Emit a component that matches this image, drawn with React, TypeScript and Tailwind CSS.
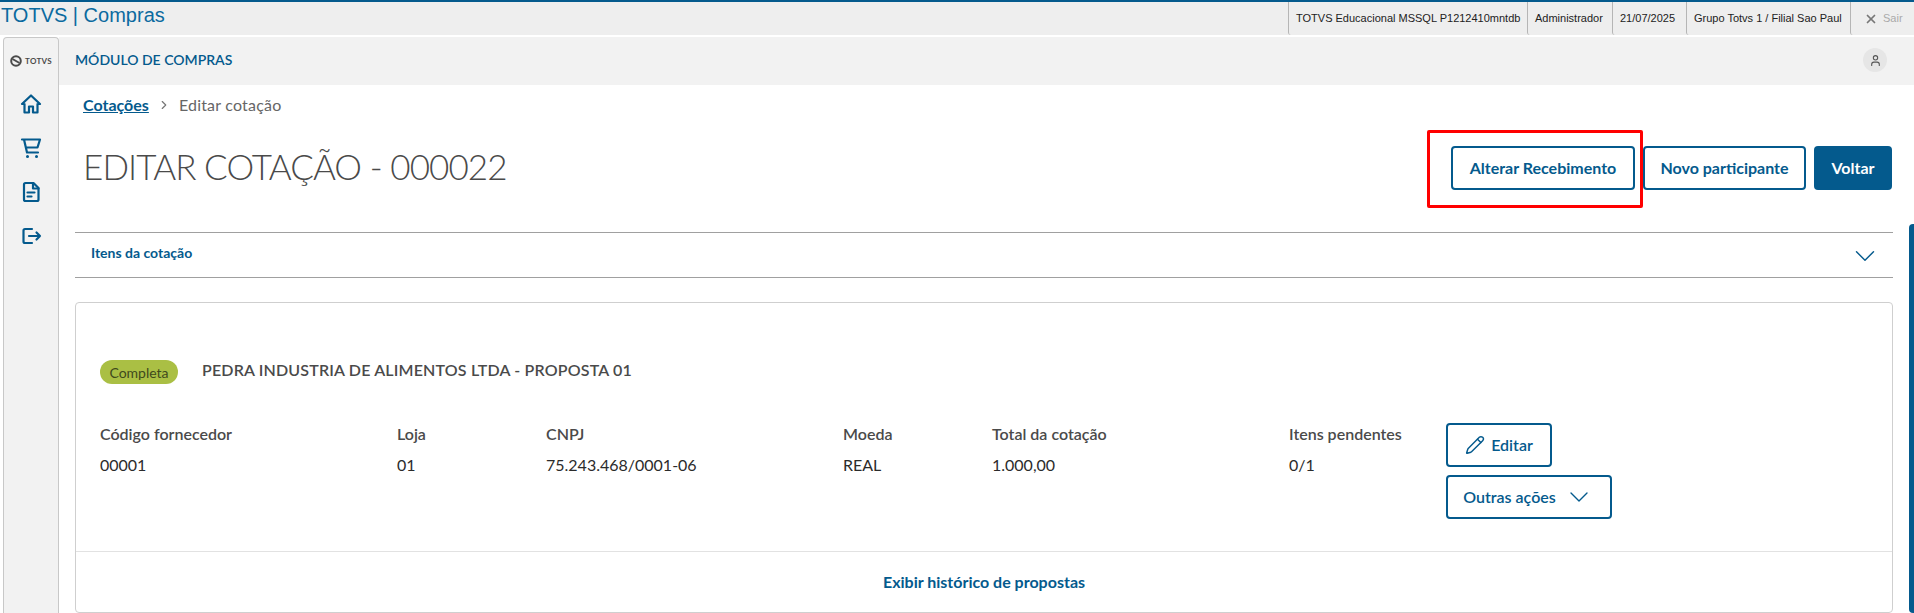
import { ChevronDown, ChevronRight, Pencil, User, X } from 'lucide-react';

const tabs = [
  { label: 'TOTVS Educacional MSSQL P1212410mntdb', width: 'w-[239px]' },
  { label: 'Administrador', width: 'w-[85px]' },
  { label: '21/07/2025', width: 'w-[74px]' },
  { label: 'Grupo Totvs 1 / Filial Sao Paul', width: 'w-[164px]' },
];
const fields = [
  { label: 'Código fornecedor', value: '00001', width: 'w-[297px]' },
  { label: 'Loja', value: '01', width: 'w-[149px]' },
  { label: 'CNPJ', value: '75.243.468/0001-06', width: 'w-[297px]' },
  { label: 'Moeda', value: 'REAL', width: 'w-[149px]' },
  { label: 'Total da cotação', value: '1.000,00', width: 'w-[297px]' },
  { label: 'Itens pendentes', value: '0/1', width: 'w-[157px]' },
];

function SideIcon({ children }: { children: React.ReactNode }) {
  return (
    <svg width="24" height="24" viewBox="0 0 24 24" fill="none" stroke="#045a8d" strokeWidth="2.2" strokeLinejoin="round" strokeLinecap="round">
      {children}
    </svg>
  );
}

function Logo() {
  return (
    <div className="flex items-center gap-[3px]">
      <svg width="12" height="12" viewBox="0 0 12 12" fill="none" stroke="#4a4a4a" strokeWidth="2">
        <circle cx="6" cy="6" r="4.8" />
        <path d="M2.5 4l7 4" />
      </svg>
      <span className="text-[8px] leading-none font-bold tracking-[0.3px] text-[#4a4a4a]">TOTVS</span>
    </div>
  );
}

export default function App() {
  return (
    <div className="relative h-[613px] w-[1914px] overflow-hidden bg-white font-['Lato','Open_Sans',sans-serif] text-[#4a4a4a]">
      <header className="flex h-[35px] items-stretch border-t-2 border-[#045a8d] bg-[#eeeeee] font-['Liberation_Sans',Arial,sans-serif]">
        <div className="flex-1 pl-[1px] text-[20px] leading-[27px] text-[#0b6a9f]">TOTVS | Compras</div>
        {tabs.map((tab) => (
          <div
            key={tab.label}
            className={`${tab.width} rounded-bl-[3px] border-l border-[#b5b5b5] pl-[7px] text-[11px] leading-[33px] whitespace-nowrap text-[#222222]`}
          >
            {tab.label}
          </div>
        ))}
        <div className="flex w-[64px] items-start gap-[5px] rounded-bl-[3px] border-l border-[#b5b5b5] pt-[10px] pl-[13px] text-[11px] leading-[15px] text-[#aaaaaa]">
          <X size={14} strokeWidth={3} className="text-[#777777]" />
          <span className="-mt-[1px]">Sair</span>
        </div>
      </header>

      <div className="flex h-[578px] pt-[2px] pl-[3px]">
        <aside className="flex w-[56px] shrink-0 flex-col items-center rounded-t-[4px] border border-b-0 border-[#c8c8c8] bg-[#f2f2f2]">
          <div className="flex h-[46px] items-center">
            <Logo />
          </div>
          <div className="flex flex-col gap-[20px] pt-[8px]">
            <SideIcon>
              <path d="M3 12 12 3.5 21 12h-2.5v8.5H14v-6h-4v6H5.5V12z" />
            </SideIcon>
            <SideIcon>
              <path d="M3 3.5h18l-2.5 8H7M5 3.5 8 16.5h11" />
              <path d="M8.5 20.5h.01M17.5 20.5h.01" strokeWidth="3" />
            </SideIcon>
            <SideIcon>
              <path d="M6.5 3h8l5 5v11.5a1.5 1.5 0 0 1-1.5 1.5H6.5A1.5 1.5 0 0 1 5 19.5v-15A1.5 1.5 0 0 1 6.5 3z" />
              <path d="M14 3v5.5h5.5M8.5 12.5h7M8.5 16.5h4" />
            </SideIcon>
            <SideIcon>
              <path d="M13 5H6a1.5 1.5 0 0 0-1.5 1.5v11A1.5 1.5 0 0 0 6 19h7" />
              <path d="M10 12h11M17.5 8.5 21 12l-3.5 3.5" />
            </SideIcon>
          </div>
        </aside>

        <main className="min-w-0 flex-1">
          <div className="flex h-[48px] items-center justify-between bg-[#f2f2f2] pr-[27px] pb-[2px] pl-[16px]">
            <span className="pb-[1px] text-[14px] font-semibold text-[#045a8d]">MÓDULO DE COMPRAS</span>
            <div className="flex h-[24px] w-[24px] items-center justify-center rounded-full bg-[#e6e6e6]">
              <User size={13} className="text-[#555555]" />
            </div>
          </div>

          <div className="pt-[8px] pr-[21px] pl-[16px]">
            <nav className="flex h-[24px] items-center pl-[8px] text-[16px]">
              <a className="font-bold text-[#045a8d] underline">Cotações</a>
              <ChevronRight size={14} className="mx-[8px] text-[#777777]" />
              <span className="tracking-[0.2px] text-[#666666]">Editar cotação</span>
            </nav>

            <div className="flex items-start justify-between pt-[21px]">
              <h1 className="pt-[4px] pl-[8px] text-[35px] leading-[48px] font-light tracking-[-0.92px] text-[#4a4a4a]">EDITAR COTAÇÃO - 000022</h1>
              <div className="mr-[1px] flex gap-[8px] pt-[8px] text-[16px] font-bold text-[#045a8d]">
                <button className="h-[44px] w-[184px] rounded-[4px] border-2 border-[#045a8d]">Alterar Recebimento</button>
                <button className="h-[44px] w-[163px] rounded-[4px] border-2 border-[#045a8d]">Novo participante</button>
                <button className="h-[44px] w-[78px] rounded-[4px] bg-[#045a8d] font-bold text-white">Voltar</button>
              </div>
            </div>

            <div className="mt-[42px] flex h-[46px] items-center justify-between border-y border-[#a0a0a0] pr-[11px] pb-[6px] pl-[16px]">
              <span className="text-[14px] font-bold text-[#045a8d]">Itens da cotação</span>
              <ChevronDown size={34} strokeWidth={1} className="mt-[7px] text-[#045a8d]" />
            </div>

            <section className="mt-[24px] rounded-[4px] border border-[#cfcfcf]">
              <div className="h-[248px] px-[24px] pt-[57px]">
                <div className="flex h-[24px] items-center gap-[24px]">
                  <span className="flex h-[24px] w-[78px] items-center justify-center rounded-full bg-[#aabf44] text-[14px] text-[#3f4a1c]">Completa</span>
                  <span className="pb-[4px] text-[16px] font-semibold tracking-[0.17px] text-[#4a4a4a]">PEDRA INDUSTRIA DE ALIMENTOS LTDA - PROPOSTA 01</span>
                </div>
                <div className="mt-[39px] flex items-start">
                  {fields.map((f) => (
                    <div key={f.label} className={f.width}>
                      <div className="text-[16px] leading-[22px] font-semibold text-[#4a4a4a]">{f.label}</div>
                      <div className="mt-[9px] text-[16px] leading-[22px] text-[#2b2b2b]">{f.value}</div>
                    </div>
                  ))}
                  <div className="flex flex-col items-start gap-[8px] text-[16px] font-semibold text-[#045a8d]">
                    <button className="flex h-[44px] w-[106px] items-center justify-center gap-[6px] rounded-[4px] border-2 border-[#045a8d]">
                      <Pencil size={20} strokeWidth={1.75} />
                      Editar
                    </button>
                    <button className="flex h-[44px] w-[166px] items-center justify-center gap-[7px] rounded-[4px] border-2 border-[#045a8d]">
                      Outras ações
                      <ChevronDown size={32} strokeWidth={1} />
                    </button>
                  </div>
                </div>
              </div>
              <div className="flex h-[61px] items-center justify-center border-t border-[#e2e2e2] text-[16px] font-bold text-[#045a8d]">
                Exibir histórico de propostas
              </div>
            </section>
          </div>
        </main>
      </div>

      {/* marcação vermelha por cima do botão */}
      <div className="pointer-events-none absolute top-[130px] left-[1427px] h-[78px] w-[216px] rounded-[2px] border-[3px] border-[#ff0000]" />
      <div className="absolute top-[224px] right-0 h-[389px] w-[5px] rounded-l-[4px] bg-[#045a8d]" />
    </div>
  );
}
